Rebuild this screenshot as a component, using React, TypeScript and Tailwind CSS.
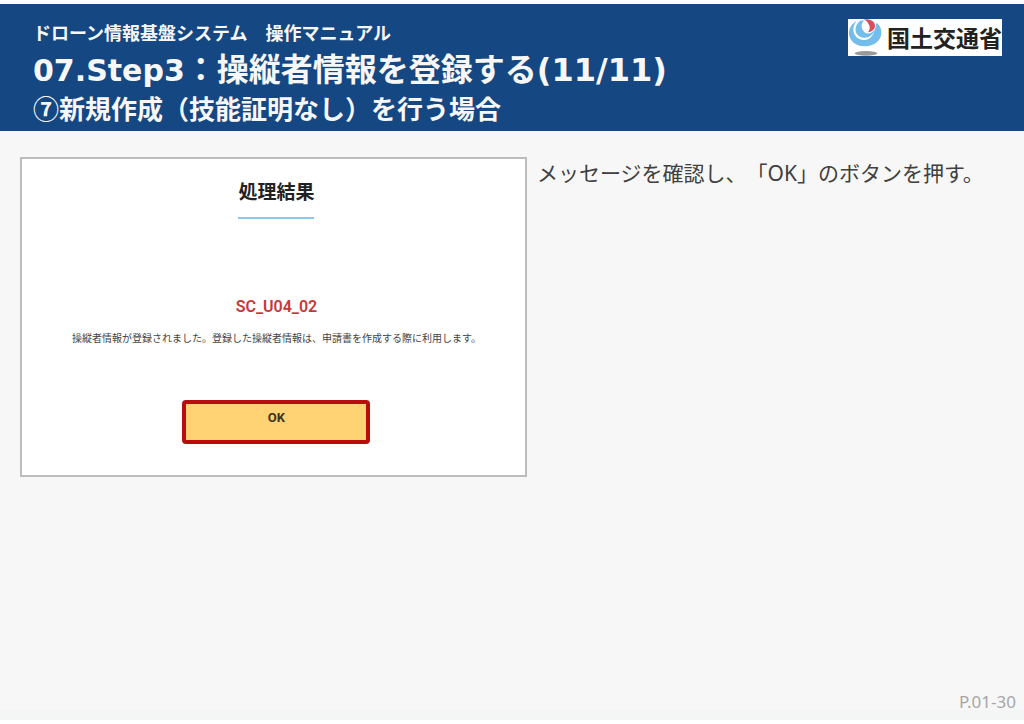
import type { ReactNode } from "react";

const MESSAGE = "操縦者情報が登録されました。登録した操縦者情報は、申請書を作成する際に利用します。";

export default function App() {
  return (
    <div className="flex min-h-screen flex-col border-y-4 border-white bg-[#f7f7f7] font-['Noto_Sans','Noto_Sans_CJK_JP',sans-serif] [text-spacing-trim:space-all]">
      <PageHeader />
      <main className="grid flex-1 grid-cols-[51fr_49fr] items-start gap-2.5 pt-[26px] pl-5">
        <ResultPanel />
        <p className="text-[21px] leading-8 whitespace-nowrap text-[#404040]">
          メッセージを確認し、「OK」のボタンを押す。
        </p>
      </main>
      <footer>
        <p className="pr-2 text-right text-[17px] leading-4 text-[#a6a6a6]">P.01-30</p>
        <div className="h-2.5 bg-[#f4f6f5]" />
      </footer>
    </div>
  );
}

function PageHeader() {
  return (
    <header className="flex items-start justify-between bg-[#154783] pt-[15px] pr-[22px] pb-1 pl-[33px] font-bold text-[#f7f7f7]">
      <div className="whitespace-nowrap">
        <p className="text-lg leading-7">ドローン情報基盤システム　操作マニュアル</p>
        <h1 className="text-[32px] leading-[44px]">
          <Latin className="text-[30px]">07.Step3</Latin>
          ：操縦者情報を登録する
          <Latin>(11/11)</Latin>
        </h1>
        <h2 className="text-[26px] leading-9">⑦新規作成（技能証明なし）を行う場合</h2>
      </div>
      <MinistryLogo />
    </header>
  );
}

function Latin({ className = "", children }: { className?: string; children: ReactNode }) {
  return <span className={`font-['DejaVu_Sans',sans-serif] leading-none ${className}`}>{children}</span>;
}

function MinistryLogo() {
  return (
    <div className="flex h-[37px] items-center gap-1 bg-white text-[#222]">
      <svg viewBox="0 0 105 111" className="h-[37px] w-[35px]" aria-hidden="true">
        <path d="M25 7C10 15 2 30 3 45C5 67 24 82 51 82C79 82 99 65 100 43C101 29 95 17 84 11L70 45L30 45Z" fill="#73bdea" />
        <path d="M26 5C9 28 15 50 33 59C57 70 80 57 85 12L72 3L40 2Z" fill="#fff" />
        <path d="M36 5C19 20 18 42 34 52C53 64 76 51 81 31C71 45 58 47 49 39C40 30 37 18 48 4Z" fill="#73bdea" />
        <path d="M47 1C67 -1 81 7 81 20C81 31 73 37 60 40C66 31 67 25 62 16C59 9 54 4 47 1Z" fill="#d9505a" />
        <ellipse cx="54" cy="103" rx="34" ry="7" fill="#999" />
      </svg>
      <span className="text-[23px] leading-8 font-bold">国土交通省</span>
    </div>
  );
}

function ResultPanel() {
  return (
    <section className="flex flex-col items-center border-2 border-[#bdbdbd] bg-white pt-5 pb-[31px] pl-1.5 font-['Roboto','Noto_Sans_CJK_JP',sans-serif]">
      <h3 className="border-b-2 border-[#8fc8ed] pb-2.5 text-[19px] leading-7 font-bold text-[#222]">処理結果</h3>
      <p className="mt-[76px] text-base leading-6 font-semibold text-[#c8373a]">SC_U04_02</p>
      <p className="mt-3 text-[10px] leading-4 whitespace-nowrap text-[#444]">{MESSAGE}</p>
      <button
        type="button"
        className="mt-[53px] h-11 w-[188px] rounded border-4 border-[#b80d0d] bg-[#ffd373] pb-2 text-[13px] leading-4 font-bold text-[#3b3320]"
      >
        OK
      </button>
    </section>
  );
}
